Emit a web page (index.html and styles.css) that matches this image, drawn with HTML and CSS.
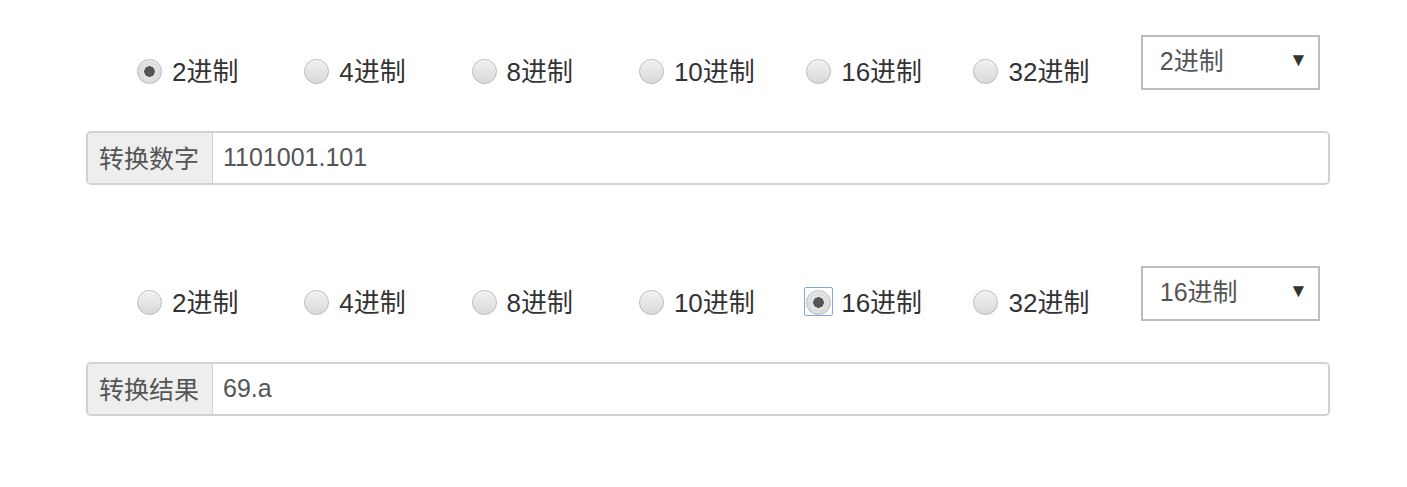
FILE: index.html
```html
<!DOCTYPE html>
<html lang="zh-CN">

<head>
  <meta charset="UTF-8">
  <meta name="viewport" content="width=device-width, initial-scale=1.0">
  <title>进制转换</title>
  <link rel="stylesheet" href="styles.css">
</head>

<body>
  <div class="wrapper">
    <!-- input side -->
    <section class="group">
      <div class="bases">
        <div class="radios">
          <label class="radio"><input type="radio" name="from" checked><span>2进制</span></label>
          <label class="radio"><input type="radio" name="from"><span>4进制</span></label>
          <label class="radio"><input type="radio" name="from"><span>8进制</span></label>
          <label class="radio"><input type="radio" name="from"><span>10进制</span></label>
          <label class="radio"><input type="radio" name="from"><span>16进制</span></label>
          <label class="radio"><input type="radio" name="from"><span>32进制</span></label>
        </div>
        <div class="select">
          <select>
            <option>2进制</option>
            <option>16进制</option>
          </select>
          <span class="arrow">▼</span>
        </div>
      </div>
      <div class="input-group">
        <span class="addon">转换数字</span>
        <input class="field" type="text" value="1101001.101">
      </div>
    </section>

    <!-- output side -->
    <section class="group">
      <div class="bases">
        <div class="radios">
          <label class="radio"><input type="radio" name="to"><span>2进制</span></label>
          <label class="radio"><input type="radio" name="to"><span>4进制</span></label>
          <label class="radio"><input type="radio" name="to"><span>8进制</span></label>
          <label class="radio"><input type="radio" name="to"><span>10进制</span></label>
          <label class="radio focus"><input type="radio" name="to" checked><span>16进制</span></label>
          <label class="radio"><input type="radio" name="to"><span>32进制</span></label>
        </div>
        <div class="select">
          <select>
            <option>16进制</option>
            <option>2进制</option>
          </select>
          <span class="arrow">▼</span>
        </div>
      </div>
      <div class="input-group">
        <span class="addon">转换结果</span>
        <input class="field" type="text" value="69.a">
      </div>
    </section>
  </div>
</body>

</html>
```

FILE: styles.css
```css
body {
  margin: 0;
  background: #fff;
  font-family: "Liberation Sans", "Noto Sans CJK SC", sans-serif;
  color: #333;
}

.wrapper {
  width: 1244px;
  padding: 35px 0 0 86px;
}

.group {
  margin-bottom: 81px;
}

.bases {
  display: flex;
  align-items: flex-start;
  height: 55px;
  margin-bottom: 41px;
}

.radios {
  display: flex;
  padding: 23px 0 0 51px;
}

.radio {
  position: relative;
  display: flex;
  align-items: center;
  width: 167.3px;
  height: 26px;
  font-size: 26px;
  color: #333;
}

.radio span {
  margin-top: -4px;
}

.radio input {
  appearance: none;
  -webkit-appearance: none;
  box-sizing: border-box;
  width: 25px;
  height: 25px;
  margin: 0 10px 0 0;
  border: 1px solid #b9b9b9;
  border-radius: 50%;
  background: linear-gradient(#f1f1f1, #d9d9d9);
  box-shadow: inset 0 1px 1px rgba(255, 255, 255, 0.8);
  outline: none;
  flex: none;
}

.radio input:checked {
  background: radial-gradient(circle, #555 0, #555 5px, #e3e3e3 5.5px, #d6d6d6 100%);
}

.radio.focus::before {
  content: "";
  position: absolute;
  left: -2px;
  top: -2px;
  width: 27px;
  height: 27px;
  border: 1px solid #7ea9e6;
  border-radius: 2px;
}

.select {
  position: relative;
  margin-left: auto;
  margin-right: 11px;
}

.select select {
  appearance: none;
  -webkit-appearance: none;
  box-sizing: border-box;
  width: 179px;
  height: 55px;
  padding: 0 0 4px 17px;
  border: 2px solid #bdbdbd;
  border-radius: 0;
  background: #fff;
  font-family: inherit;
  font-size: 25px;
  color: #555;
}

.select .arrow {
  position: absolute;
  right: 12px;
  top: 14px;
  font-size: 19px;
  color: #333;
  pointer-events: none;
}

.input-group {
  display: flex;
  box-sizing: border-box;
  height: 54px;
  border: 2px solid #d2d2d2;
  border-radius: 5px;
  overflow: hidden;
}

.addon {
  display: flex;
  align-items: center;
  padding: 0 13px 2px 11px;
  background: #eee;
  border-right: 1px solid #d2d2d2;
  font-size: 25px;
  color: #555;
}

.field {
  flex: 1;
  border: none;
  outline: none;
  padding: 0 0 2px 10px;
  font-family: inherit;
  font-size: 25px;
  color: #555;
}
```
